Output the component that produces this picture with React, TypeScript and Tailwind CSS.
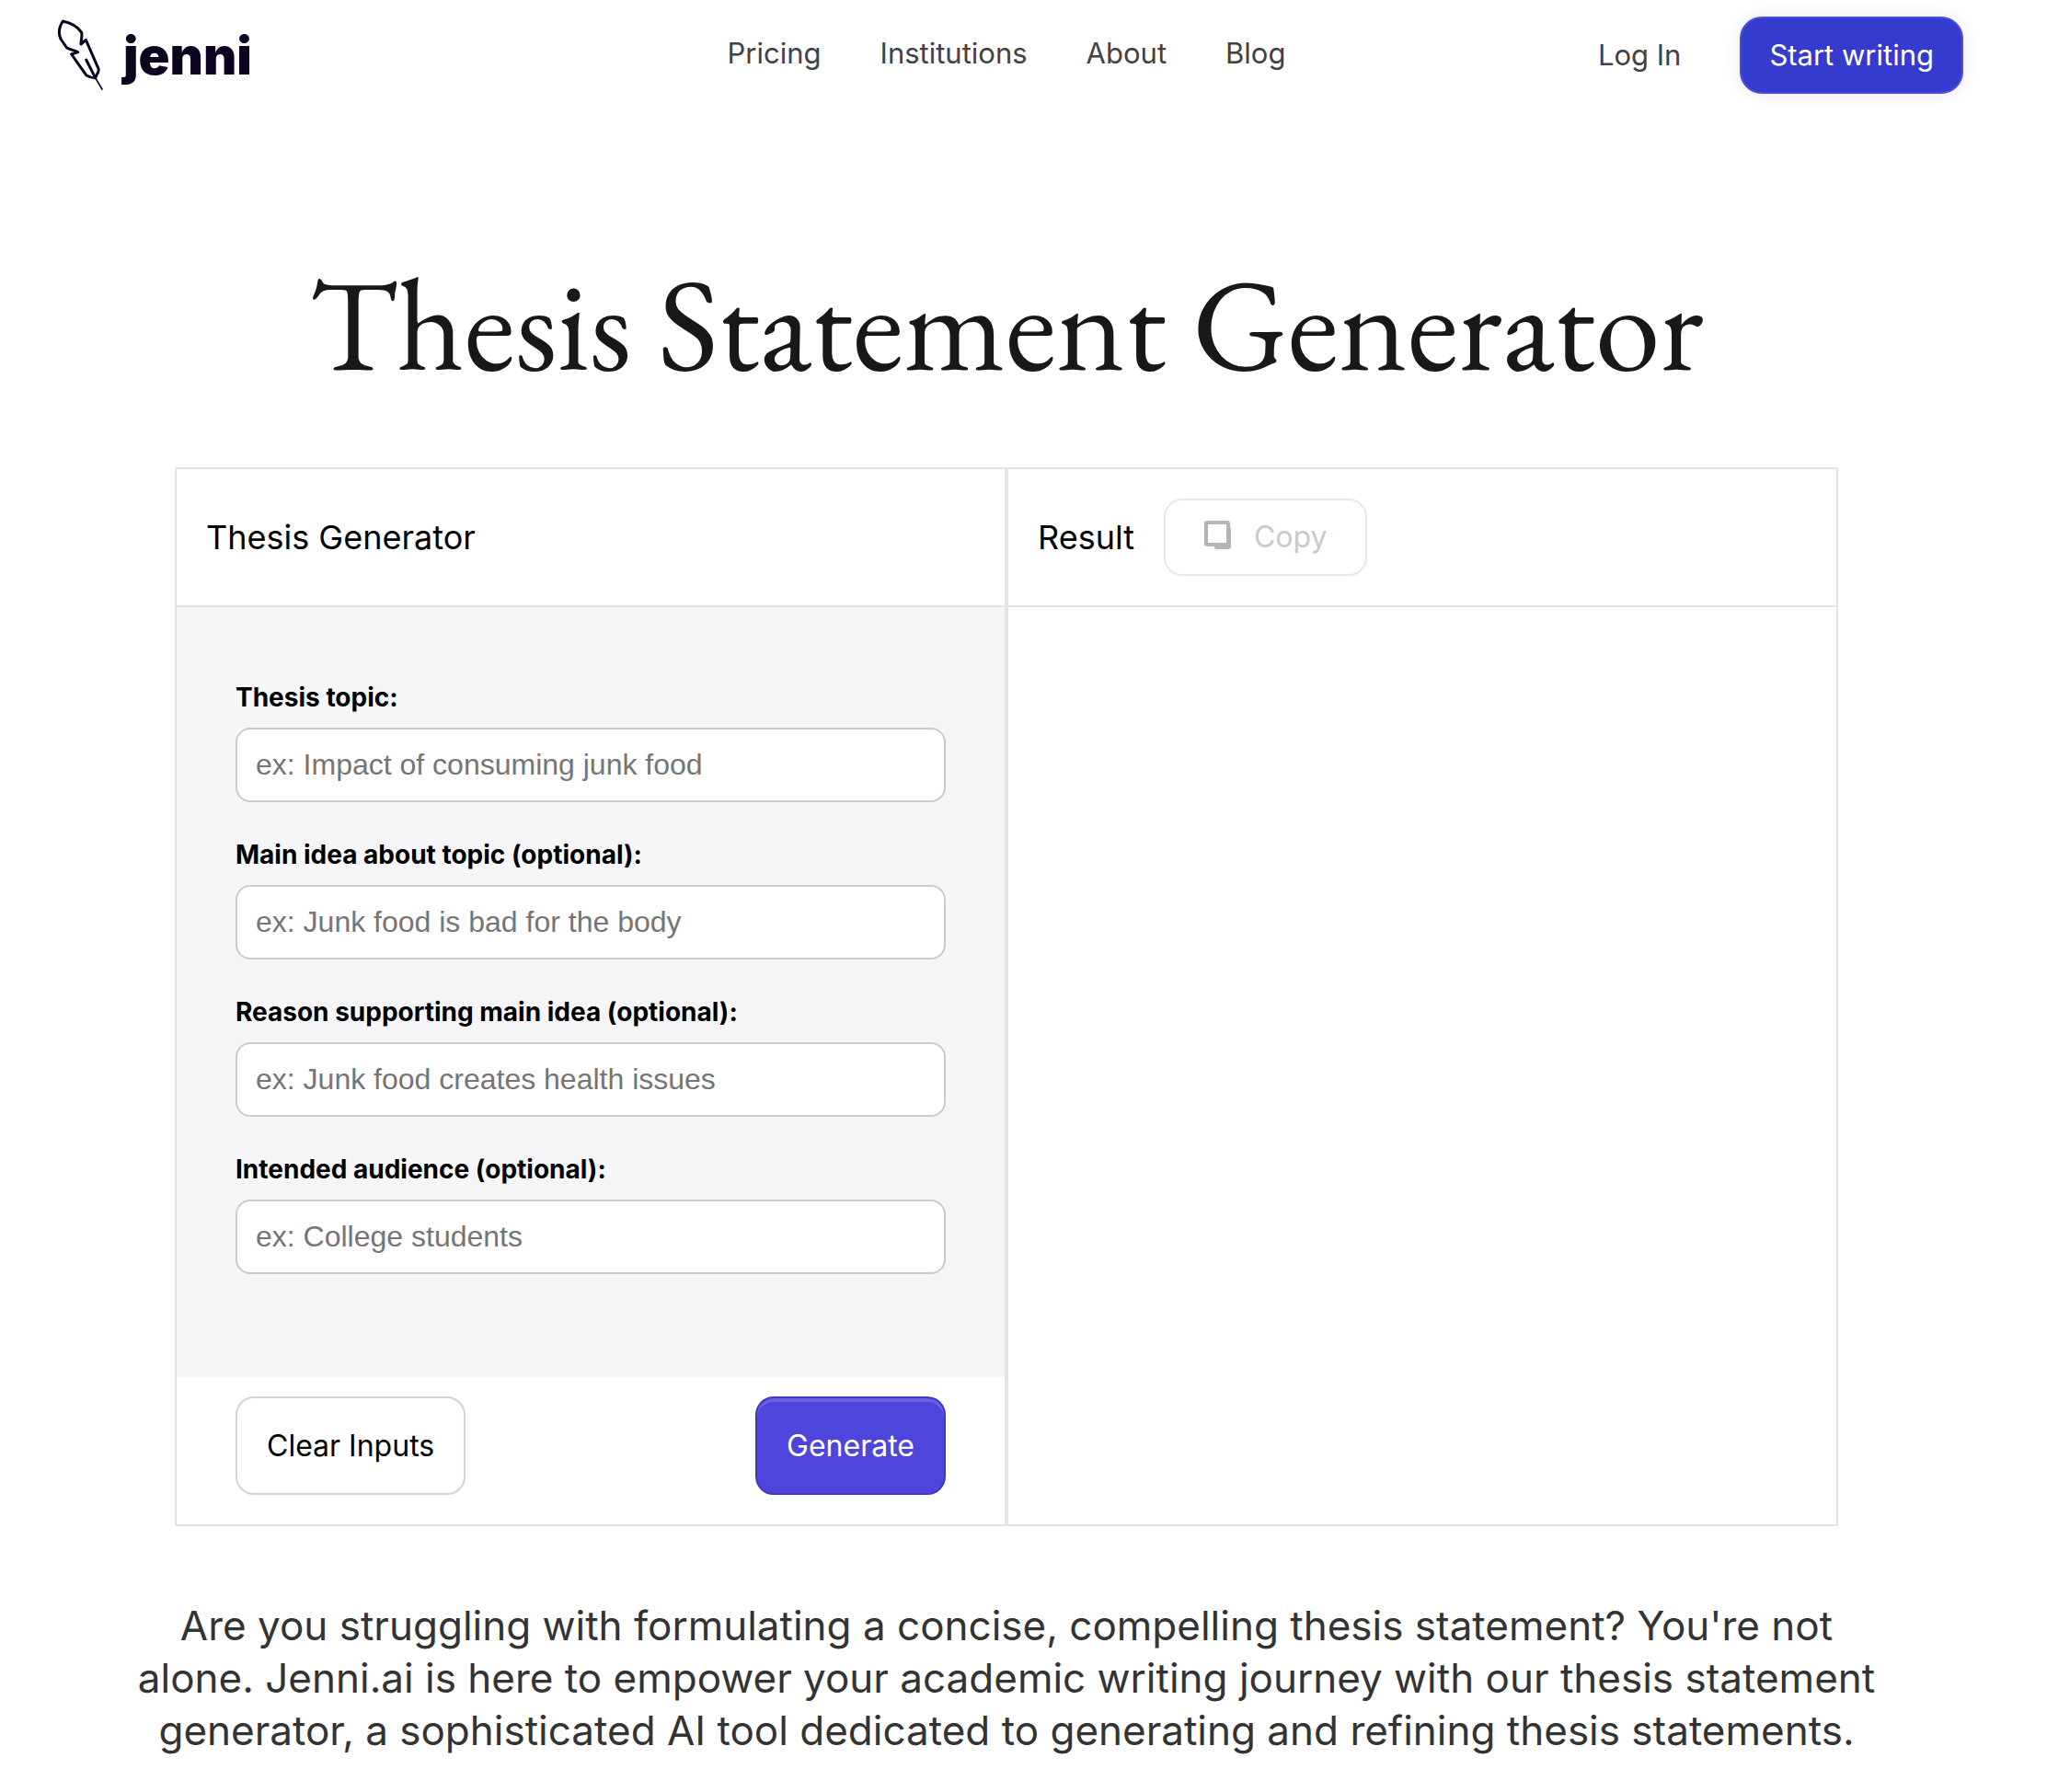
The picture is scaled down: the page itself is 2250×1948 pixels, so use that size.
import React from "react";

const links = ["Pricing", "Institutions", "About", "Blog"];

const fields = [
  { id: "topic", label: "Thesis topic:", placeholder: "ex: Impact of consuming junk food" },
  { id: "idea", label: "Main idea about topic (optional):", placeholder: "ex: Junk food is bad for the body" },
  { id: "reason", label: "Reason supporting main idea (optional):", placeholder: "ex: Junk food creates health issues" },
  { id: "audience", label: "Intended audience (optional):", placeholder: "ex: College students" },
];

function Feather() {
  return (
    <svg viewBox="0 0 156 240" className="h-20 w-[52px]" fill="none" stroke="#0b0320" strokeLinejoin="round" strokeLinecap="round" aria-hidden="true">
      <path
        strokeWidth="9"
        d="M19 9 C44 14 65 24 80 46 C83 58 78 70 78 84 L94 70 L135 164 C137 172 134 178 129 185 L125 194 C114 194 105 191 95 185 L47 117 L68 110 C57 103 43 103 32 96 L12 67 C4 49 6 29 19 9 Z"
      />
      <path strokeWidth="9" d="M95 135 L125 194" />
      <path strokeWidth="5" d="M125 194 L147 231" />
    </svg>
  );
}

function CopyIcon() {
  return (
    <svg viewBox="0 0 30 31" className="mb-1.5 h-[31px] w-[30px]" aria-hidden="true">
      <path fill="#b5b4bb" d="M11 26h15V7h1a2 2 0 0 1 2 2v19a3 3 0 0 1-3 3H13a2 2 0 0 1-2-2z" />
      <rect x="2" y="2" width="24" height="24" rx="1" fill="#fff" stroke="#b5b4bb" strokeWidth="4" />
    </svg>
  );
}

export default function App() {
  return (
    <div className="min-h-screen bg-white pr-[62px] font-['Inter',sans-serif] text-black">
      <header className="grid h-[120px] grid-cols-[1fr_auto_1fr] items-center px-[54px]">
        <a href="#" className="flex items-center gap-5 pl-2 text-[#0b0320]">
          <Feather />
          <span className="pt-0.5 text-[56px] leading-[60px] font-black">jenni</span>
        </a>
        <nav className="flex gap-16 pb-1 text-[31px] leading-10 text-[#424147]">
          {links.map((l) => (
            <a key={l} href="#">{l}</a>
          ))}
        </nav>
        <div className="flex items-center justify-end gap-16 text-[31px] leading-10">
          <a href="#" className="text-[#424147]">Log In</a>
          <button className="h-[84px] rounded-3xl border-2 border-[#4b51d3] bg-[#343bcd] px-[30px] text-white shadow-[0_0_16px_rgba(52,59,205,0.12)]">
            Start writing
          </button>
        </div>
      </header>

      <main className="flex flex-col items-center">
        <h1 className="mt-[152px] text-center font-['EB_Garamond','Liberation_Serif',serif] text-[142px] leading-[160px] text-[#18181a]">
          Thesis Statement Generator
        </h1>

        <div className="mt-[76px] grid w-[83%] max-w-[1808px] grid-cols-2">
          <section className="border-2 border-[#e4e4e5]">
            <div className="flex h-[150px] items-center border-b-2 border-[#e4e4e5] px-8">
              <h2 className="text-[36px] leading-10">Thesis Generator</h2>
            </div>
            <form onSubmit={(e) => e.preventDefault()}>
              <div className="flex flex-col gap-10 bg-[#f6f6f9] px-16 pt-[81px] pb-28">
                {fields.map((f) => (
                  <div key={f.id} className="flex flex-col gap-4">
                    <label htmlFor={f.id} className="text-[28px] leading-[34px] font-bold">{f.label}</label>
                    <input
                      id={f.id}
                      placeholder={f.placeholder}
                      className="h-[81px] rounded-2xl border-2 border-[#cbcbcb] bg-white px-5 font-['Liberation_Sans',sans-serif] text-[32px] placeholder:text-[#757575]"
                    />
                  </div>
                ))}
              </div>
              <div className="flex justify-between px-16 pt-[21px] pb-8 text-[32px] leading-10">
                <button type="reset" className="h-[107px] rounded-[20px] border-2 border-[#d3d2d8] bg-white px-8">
                  Clear Inputs
                </button>
                <button type="submit" className="h-[107px] rounded-[20px] border-2 border-[#4138c2] bg-[#4e46dc] px-8 text-white shadow-[inset_0_4px_0_rgba(255,255,255,0.15)]">
                  Generate
                </button>
              </div>
            </form>
          </section>
          <section className="border-2 border-[#e4e4e5]">
            <div className="flex h-[150px] items-center gap-8 border-b-2 border-[#e4e4e5] px-8">
              <h2 className="text-[36px] leading-10">Result</h2>
              <button disabled className="flex h-[84px] items-center gap-6 rounded-[20px] border-2 border-[#e8e8e9] bg-white px-[42px] text-[32px] leading-10 text-[#c9c9ce]">
                <CopyIcon />
                Copy
              </button>
            </div>
          </section>
        </div>

        <p className="mt-20 w-[88%] max-w-[1900px] text-center text-[44px] leading-[57px] text-[#333]">
          Are you struggling with formulating a concise, compelling thesis statement? You're not alone. Jenni.ai is here to empower your academic writing journey with our thesis statement generator, a sophisticated AI tool dedicated to generating and refining thesis statements.
        </p>
      </main>
    </div>
  );
}
